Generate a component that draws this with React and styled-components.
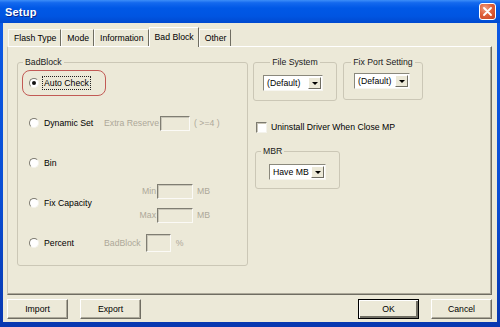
import React from "react";
import styled, { createGlobalStyle, css } from "styled-components";

const GlobalStyle = createGlobalStyle`
  html, body {
    margin: 0;
    padding: 0;
    background: #0a4fd6;
  }
  body {
    font-family: "Liberation Sans", Arial, sans-serif;
    font-size: 8.7px;
    color: #000;
  }
`;

const tabs = ["Flash Type", "Mode", "Information", "Bad Block", "Other"];

const App = () => {
  return (
    <>
      <GlobalStyle />
      <Window>
        <TitleBar>
          <Title>Setup</Title>
          <CloseButton>
            <svg width="9" height="9" viewBox="0 0 9 9">
              <path d="M1 1 L8 8 M8 1 L1 8" stroke="#fff" strokeWidth="1.8" strokeLinecap="round" />
            </svg>
          </CloseButton>
        </TitleBar>

        <Body>
          <TabStrip>
            {tabs.map((t) => (
              <Tab key={t} active={t === "Bad Block"}>
                {t}
              </Tab>
            ))}
          </TabStrip>

          <Panel>
            <BadBlockGroup>
              <Legend>BadBlock</Legend>
              <OptionList>
                <OptionRow>
                  <Choice highlighted>
                    <Radio checked />
                    <ChoiceText focused>Auto Check</ChoiceText>
                  </Choice>
                </OptionRow>

                <OptionRow>
                  <Choice>
                    <Radio />
                    <ChoiceText>Dynamic Set</ChoiceText>
                  </Choice>
                  <Muted>Extra Reserve</Muted>
                  <Field width={30} />
                  <Muted gap={4}>( &gt;=4 )</Muted>
                </OptionRow>

                <OptionRow>
                  <Choice>
                    <Radio />
                    <ChoiceText>Bin</ChoiceText>
                  </Choice>
                </OptionRow>

                <OptionRow>
                  <Choice>
                    <Radio />
                    <ChoiceText>Fix Capacity</ChoiceText>
                  </Choice>
                  <RangeStack>
                    <RangeRow>
                      <RangeLabel>Min</RangeLabel>
                      <Field width={36} />
                      <Muted gap={4}>MB</Muted>
                    </RangeRow>
                    <RangeRow>
                      <RangeLabel>Max</RangeLabel>
                      <Field width={36} />
                      <Muted gap={4}>MB</Muted>
                    </RangeRow>
                  </RangeStack>
                </OptionRow>

                <OptionRow>
                  <Choice>
                    <Radio />
                    <ChoiceText>Percent</ChoiceText>
                  </Choice>
                  <Muted>BadBlock</Muted>
                  <Field width={25} height={18} gap={5} />
                  <Muted gap={5}>%</Muted>
                </OptionRow>
              </OptionList>
            </BadBlockGroup>

            <RightColumn>
              <ComboGroups>
                <SmallGroup width={84} height={44}>
                  <Legend centered>File System</Legend>
                  <Combo width={60} inset={9} top={8}>
                    <ComboText>(Default)</ComboText>
                    <ComboButton>
                      <Arrow />
                    </ComboButton>
                  </Combo>
                </SmallGroup>
                <SmallGroup width={80} height={43}>
                  <Legend centered>Fix Port Setting</Legend>
                  <Combo width={56} inset={10} top={6}>
                    <ComboText>(Default)</ComboText>
                    <ComboButton>
                      <Arrow />
                    </ComboButton>
                  </Combo>
                </SmallGroup>
              </ComboGroups>

              <CheckRow>
                <CheckBox />
                <span>Uninstall Driver When Close MP</span>
              </CheckRow>

              <SmallGroup width={85} height={43} spaced>
                <Legend>MBR</Legend>
                <Combo width={57} inset={13} top={8}>
                  <ComboText>Have MB</ComboText>
                  <ComboButton>
                    <Arrow />
                  </ComboButton>
                </Combo>
              </SmallGroup>
            </RightColumn>
          </Panel>

          <ButtonBar>
            <ButtonGroup>
              <Button>Import</Button>
              <Button>Export</Button>
            </ButtonGroup>
            <ButtonGroup>
              <Button primary>OK</Button>
              <Button>Cancel</Button>
            </ButtonGroup>
          </ButtonBar>
        </Body>
      </Window>
    </>
  );
};

export default App;

const Window = styled.div`
  width: 500px;
  height: 327px;
  display: flex;
  flex-direction: column;
  background: linear-gradient(180deg, #0c5ae6 0%, #0a4ed4 60%, #0838b0 100%);
  overflow: hidden;
`;

const TitleBar = styled.div`
  height: 23px;
  flex: none;
  display: flex;
  align-items: center;
  justify-content: space-between;
  padding: 0 4px 0 5px;
  box-sizing: border-box;
  background: linear-gradient(
    180deg,
    #3d8ef8 0%,
    #1469ee 12%,
    #0058e6 35%,
    #0055e2 70%,
    #0049cf 100%
  );
`;

const Title = styled.span`
  color: #fff;
  font-weight: bold;
  font-size: 11px;
  letter-spacing: 0.2px;
  text-shadow: 1px 1px 0 #0b2a8c;
`;

const CloseButton = styled.div`
  width: 17px;
  height: 17px;
  box-sizing: border-box;
  border: 1px solid #fff;
  border-radius: 3px;
  background: radial-gradient(circle at 35% 30%, #f0a184 0%, #e0623c 45%, #c4401f 100%);
  display: flex;
  align-items: center;
  justify-content: center;
`;

const Body = styled.div`
  flex: 1;
  margin: 0 3px 5px 3px;
  background: #ece9d8;
  padding: 4px 5px 0 4px;
  display: flex;
  flex-direction: column;
`;

const TabStrip = styled.div`
  height: 19px;
  display: flex;
  align-items: flex-end;
  padding-left: 1px;
`;

const Tab = styled.div`
  height: 17px;
  box-sizing: border-box;
  padding: 0 4px 0 5px;
  display: flex;
  align-items: center;
  border-top: 1px solid #fbfbf7;
  border-left: 1px solid #fbfbf7;
  border-right: 1px solid #6f6d62;
  background: #ece9d8;
  white-space: nowrap;

  ${(p) =>
    p.active &&
    css`
      height: 20px;
      margin-bottom: -1px;
      padding: 0 4px 2px 5px;
      position: relative;
      z-index: 1;
      border-top-color: #fff;
      border-left-color: #fff;
    `}
`;

const Panel = styled.div`
  height: 249px;
  box-sizing: border-box;
  border: 1px solid;
  border-color: #fff #6f6d62 #6f6d62 #c7c4b5;
  box-shadow: inset -1px -1px 0 #aca899;
  display: grid;
  grid-template-columns: 231px 1fr;
  column-gap: 5px;
  padding: 10px 0 0 9px;
  align-items: start;
`;

const groupBox = css`
  margin: 0;
  padding: 0;
  min-width: 0;
  box-sizing: border-box;
  border: 1px solid #cbc7b6;
  border-radius: 3px;
`;

const BadBlockGroup = styled.fieldset`
  ${groupBox};
  width: 231px;
  height: 209px;
`;

const Legend = styled.legend`
  padding: 0 2px;
  margin-left: 5px;
  line-height: 10px;
  font-size: 8.7px;
  color: #1a1a1a;

  ${(p) =>
    p.centered &&
    css`
      margin-left: auto;
      margin-right: auto;
    `}
`;

const OptionList = styled.div`
  display: grid;
  grid-auto-rows: 40px;
  margin-top: -4px;
  padding-left: 11px;
`;

const OptionRow = styled.div`
  display: flex;
  align-items: center;
`;

const Choice = styled.label`
  width: 75px;
  flex: none;
  display: flex;
  align-items: center;
  gap: 4px;
  position: relative;

  ${(p) =>
    p.highlighted &&
    css`
      &::after {
        content: "";
        position: absolute;
        left: -7px;
        right: -2px;
        top: -7px;
        bottom: -7px;
        border: 1.5px solid #c25a55;
        border-radius: 8px;
      }
    `}
`;

const Radio = styled.span`
  width: 10px;
  height: 10px;
  box-sizing: border-box;
  border-radius: 50%;
  border: 1px solid;
  border-color: #7d7b70 #f4f3ec #f4f3ec #7d7b70;
  background: #fff;
  position: relative;
  flex: none;

  ${(p) =>
    p.checked &&
    css`
      &::after {
        content: "";
        position: absolute;
        left: 2px;
        top: 2px;
        width: 4px;
        height: 4px;
        border-radius: 50%;
        background: #111;
      }
    `}
`;

const ChoiceText = styled.span`
  line-height: 12px;
  padding: 0 1px;
  white-space: nowrap;

  ${(p) =>
    p.focused &&
    css`
      outline: 1px dotted #222;
    `}
`;

const Muted = styled.span`
  color: #aca899;
  white-space: nowrap;
  margin-left: ${(p) => p.gap || 0}px;
`;

const Field = styled.span`
  display: block;
  width: ${(p) => p.width}px;
  height: ${(p) => p.height || 15}px;
  margin-left: ${(p) => p.gap || 1}px;
  box-sizing: border-box;
  border: 1px solid;
  border-color: #7f7d72 #fbfaf6 #fbfaf6 #7f7d72;
  box-shadow: inset 1px 1px 0 #c9c6b8;
  background: #ece9d8;
  flex: none;
`;

const RangeStack = styled.div`
  display: flex;
  flex-direction: column;
  gap: 9px;
`;

const RangeRow = styled.div`
  display: flex;
  align-items: center;
`;

const RangeLabel = styled.span`
  width: 52px;
  text-align: right;
  color: #aca899;
`;

const RightColumn = styled.div`
  display: flex;
  flex-direction: column;
  align-items: flex-start;
`;

const ComboGroups = styled.div`
  display: flex;
  gap: 6px;
  align-items: flex-start;
`;

const SmallGroup = styled.fieldset`
  ${groupBox};
  width: ${(p) => p.width}px;
  height: ${(p) => p.height}px;
  margin-left: ${(p) => (p.spaced ? 2 : 0)}px;
  margin-top: ${(p) => (p.spaced ? 13 : 0)}px;
`;

const Combo = styled.div`
  width: ${(p) => p.width}px;
  height: 16px;
  margin: ${(p) => p.top}px 0 0 ${(p) => p.inset}px;
  box-sizing: border-box;
  border: 1px solid;
  border-color: #8a887c #f7f6f0 #f7f6f0 #8a887c;
  background: #fff;
  display: flex;
  align-items: stretch;
  padding: 1px;
`;

const ComboText = styled.span`
  flex: 1;
  display: flex;
  align-items: center;
  padding-left: 2px;
  font-size: 8.7px;
  white-space: nowrap;
  overflow: hidden;
`;

const ComboButton = styled.span`
  width: 13px;
  flex: none;
  box-sizing: border-box;
  background: #ece9d8;
  border: 1px solid;
  border-color: #fff #6f6d62 #6f6d62 #fff;
  display: flex;
  align-items: center;
  justify-content: center;
`;

const Arrow = styled.span`
  width: 0;
  height: 0;
  border-left: 3px solid transparent;
  border-right: 3px solid transparent;
  border-top: 3px solid #000;
`;

const CheckRow = styled.label`
  display: flex;
  align-items: center;
  gap: 4px;
  margin: 20px 0 0 3px;
  line-height: 12px;
  white-space: nowrap;
`;

const CheckBox = styled.span`
  width: 11px;
  height: 11px;
  box-sizing: border-box;
  border: 1px solid;
  border-color: #7d7b70 #f4f3ec #f4f3ec #7d7b70;
  box-shadow: inset 1px 1px 0 #c9c6b8;
  background: #fff;
  flex: none;
`;

const ButtonBar = styled.div`
  display: flex;
  justify-content: space-between;
  margin-top: 4px;
`;

const ButtonGroup = styled.div`
  display: flex;
  gap: 12px;
`;

const Button = styled.button`
  width: 61px;
  height: 20px;
  box-sizing: border-box;
  font-family: "Liberation Sans", Arial, sans-serif;
  font-size: 8.7px;
  color: #000;
  background: #ece9d8;
  border: 1px solid;
  border-color: #fff #6f6d62 #6f6d62 #fff;
  box-shadow: inset -1px -1px 0 #aca899;
  padding: 0;

  ${(p) =>
    p.primary &&
    css`
      border: 1px solid #000;
      box-shadow: inset 1px 1px 0 #fff, inset -2px -2px 0 #6f6d62;
    `}
`;
